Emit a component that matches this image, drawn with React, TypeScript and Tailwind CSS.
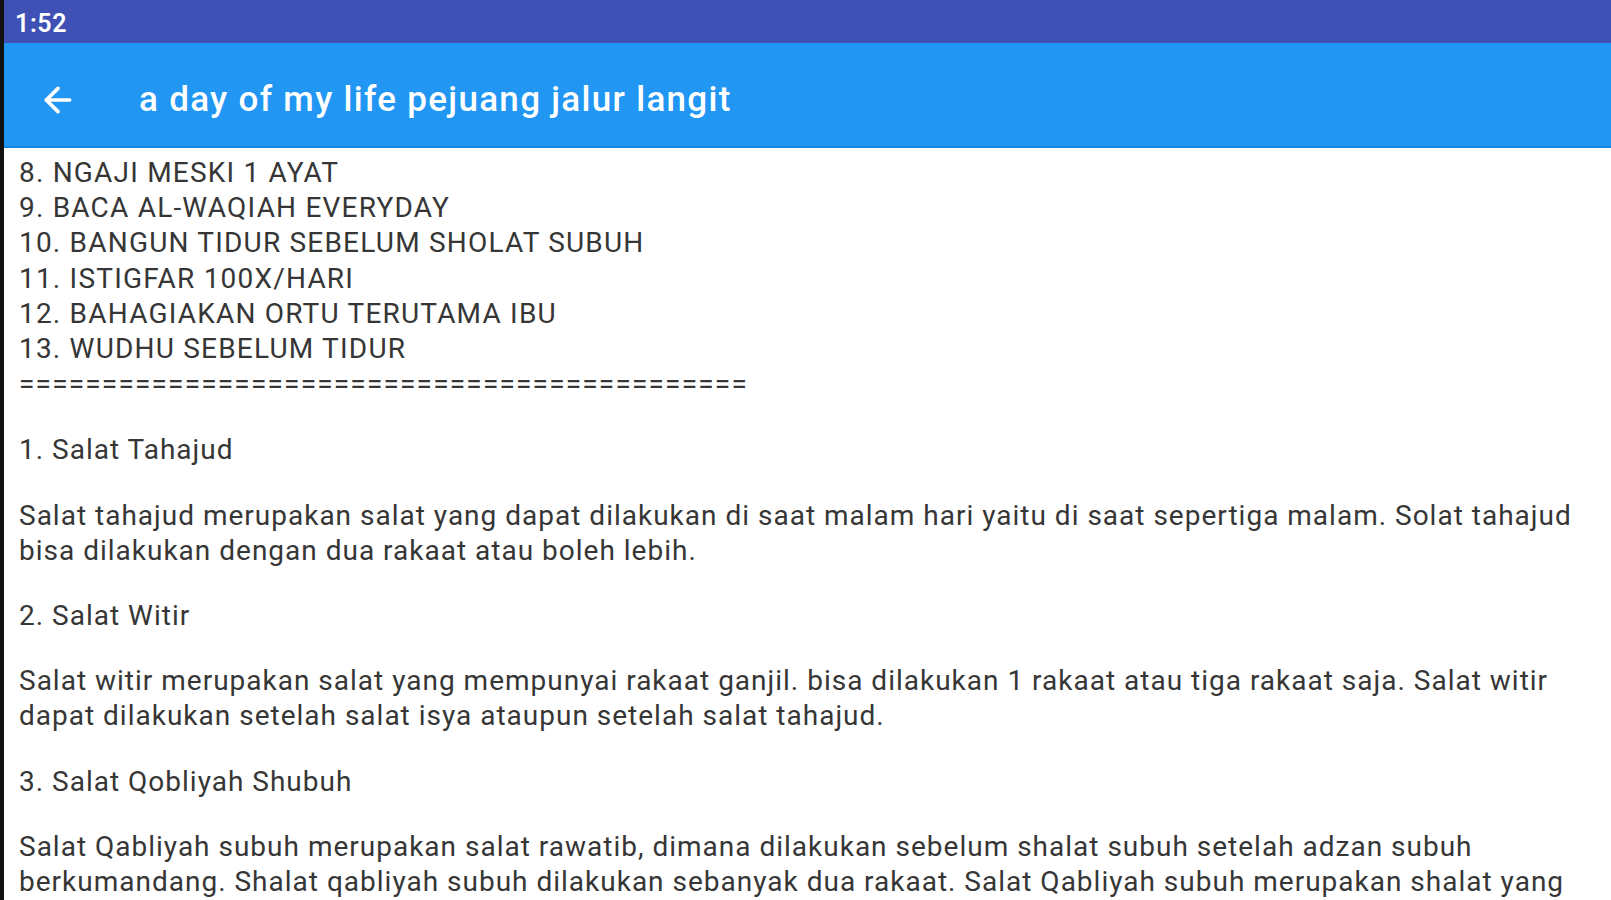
import { ArrowLeft } from "lucide-react";

const list = [
  "8. NGAJI MESKI 1 AYAT",
  "9. BACA AL-WAQIAH EVERYDAY",
  "10. BANGUN TIDUR SEBELUM SHOLAT SUBUH",
  "11. ISTIGFAR 100X/HARI",
  "12. BAHAGIAKAN ORTU TERUTAMA IBU",
  "13. WUDHU SEBELUM TIDUR",
  "=".repeat(44),
];

const blocks = [
  "1. Salat Tahajud",
  "Salat tahajud merupakan salat yang dapat dilakukan di saat malam hari yaitu di saat sepertiga malam. Solat tahajud bisa dilakukan dengan dua rakaat atau boleh lebih.",
  "2. Salat Witir",
  "Salat witir merupakan salat yang mempunyai rakaat ganjil. bisa dilakukan 1 rakaat atau tiga rakaat saja. Salat witir dapat dilakukan setelah salat isya ataupun setelah salat tahajud.",
  "3. Salat Qobliyah Shubuh",
  "Salat Qabliyah subuh merupakan salat rawatib, dimana dilakukan sebelum shalat subuh setelah adzan subuh berkumandang. Shalat qabliyah subuh dilakukan sebanyak dua rakaat. Salat Qabliyah subuh merupakan shalat yang sangat dianjurkan oleh Rasulullah.",
];

export default function App() {
  return (
    <div className="flex h-[900px] w-[1611px] overflow-hidden bg-black font-['Roboto',sans-serif]">
      <div className="w-[4px] shrink-0 bg-[#111]" />
      <div className="flex min-w-0 flex-1 flex-col bg-white">
        <div className="flex h-[43px] shrink-0 items-center bg-[#3f51b5] pl-[11px] pt-[4px] text-[25px] font-semibold tracking-[0.6px] text-white">
          1:52
        </div>
        <div className="flex h-[105px] shrink-0 items-center border-b-2 border-[#1a86dc] bg-[#2196f3] pt-[11px] text-white">
          <div className="flex w-[135px] shrink-0 items-center pl-[34px]">
            <ArrowLeft size={40} strokeWidth={2.2} />
          </div>
          <h1 className="text-[35px] font-medium tracking-[1.3px]">a day of my life pejuang jalur langit</h1>
        </div>
        <div className="flex flex-col gap-[30px] pl-[15px] pr-[20px] pt-[7px] text-[28px] leading-[35.2px] text-[#363636]">
          <div className="mb-[1px] tracking-[1.2px]">
            {list.map((l) => (
              <div key={l}>{l}</div>
            ))}
          </div>
          {blocks.map((b) => (
            <p key={b} className="tracking-[1px]">
              {b}
            </p>
          ))}
        </div>
      </div>
    </div>
  );
}
